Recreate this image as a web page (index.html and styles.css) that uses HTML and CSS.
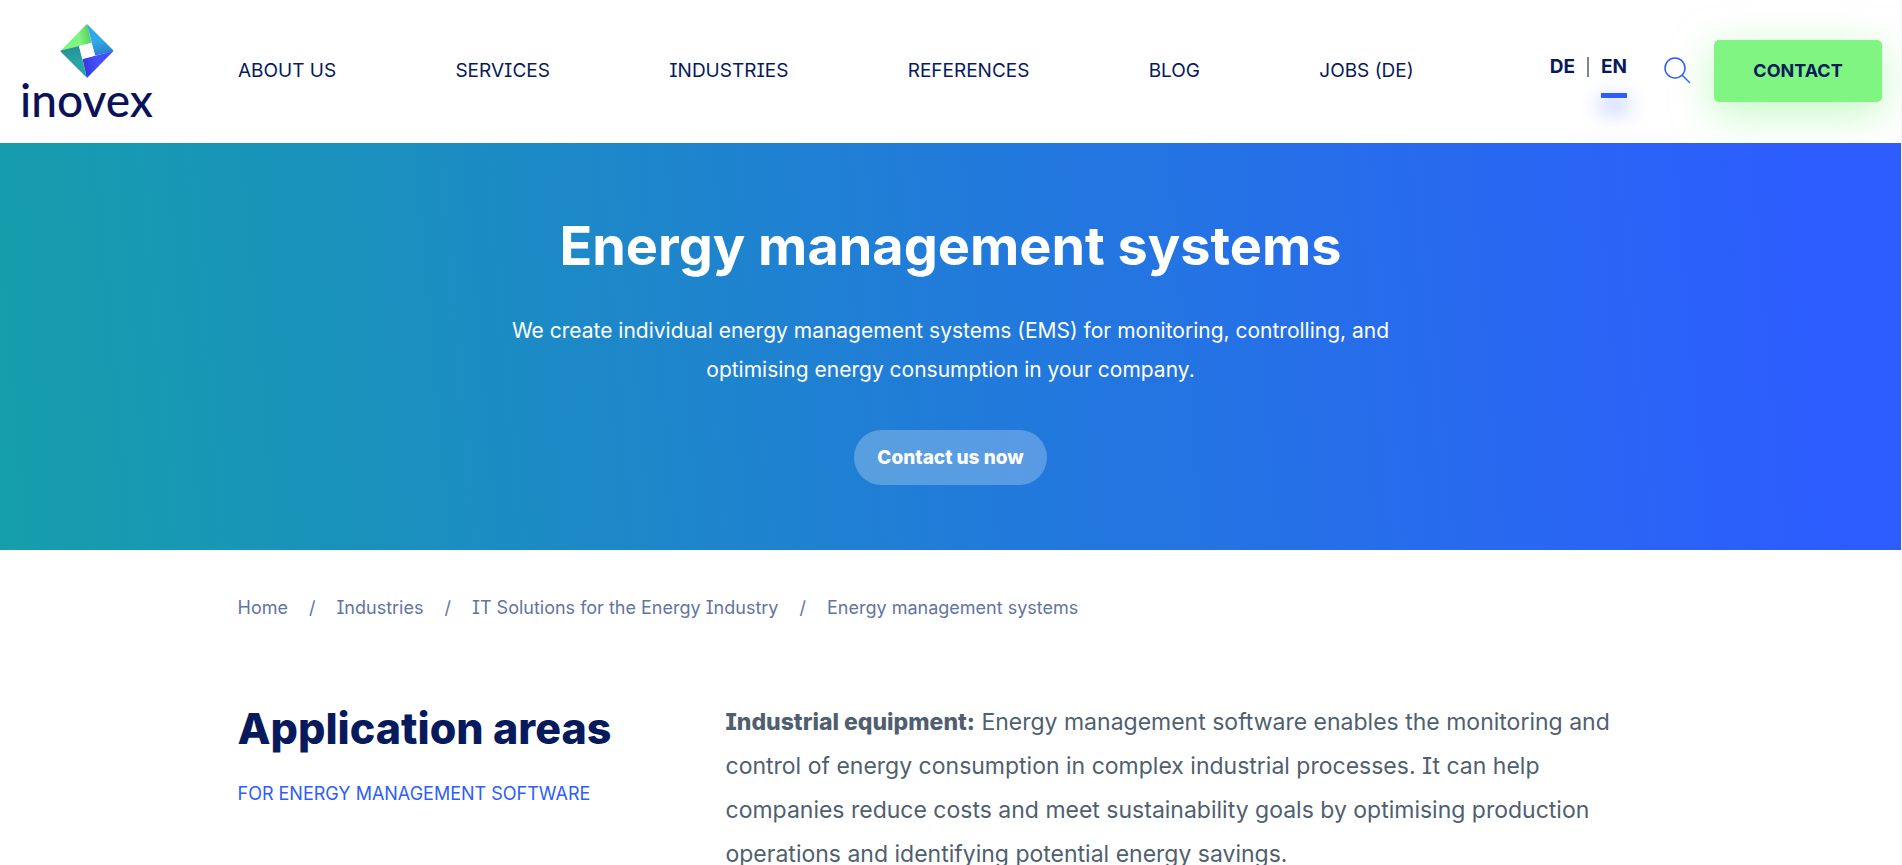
FILE: index.html
```html
<!DOCTYPE html>
<html lang="en">
<head>
    <meta charset="UTF-8">
    <meta name="viewport" content="width=device-width, initial-scale=1.0">
    <title>Energy management systems - inovex</title>
    <link rel="stylesheet" href="styles.css">
</head>
<body>
    <header class="header">
        <a class="logo" href="#" aria-label="inovex">
            <svg class="logo-mark" viewBox="0 0 54 54" aria-hidden="true">
                <defs>
                    <linearGradient id="green" x1="0" y1="0.6" x2="1" y2="0.4">
                        <stop offset="0.6" stop-color="#7ef57e"/>
                        <stop offset="1" stop-color="#57c95f"/>
                    </linearGradient>
                    <linearGradient id="blue" x1="0.3" y1="0" x2="0.5" y2="1">
                        <stop offset="0.55" stop-color="#30a8ea"/>
                        <stop offset="1" stop-color="#2781c4"/>
                    </linearGradient>
                    <linearGradient id="violet" x1="1" y1="0.4" x2="0" y2="0.6">
                        <stop offset="0.5" stop-color="#4450ff"/>
                        <stop offset="1" stop-color="#3436d8"/>
                    </linearGradient>
                    <linearGradient id="teal" x1="0.5" y1="1" x2="0.4" y2="0">
                        <stop offset="0.5" stop-color="#29a5a3"/>
                        <stop offset="1" stop-color="#258e94"/>
                    </linearGradient>
                </defs>
                <path fill="url(#green)" d="M0.500 27 L26 0.800 Q27 0 27.500 1 L31.500 19 L19 22 Z"/>
                <path fill="url(#blue)" d="M27 0 L53 26 Q53.500 27 53 27.500 L35 31.500 Z"/>
                <path fill="url(#violet)" d="M53.500 27 L28 53 Q27 54 26.500 53 L22.500 35 Z"/>
                <path fill="url(#teal)" d="M27 54 L1 28 Q0 27 1 26.500 L19 22 Z"/>
                <path fill="#fff" d="M19 22 L31.500 19 L35 31.500 L22.500 35 Z"/>
            </svg>
            <span class="logo-text">inovex</span>
        </a>
        <nav class="nav">
            <a href="#">ABOUT US</a>
            <a href="#">SERVICES</a>
            <a href="#">INDUSTRIES</a>
            <a href="#">REFERENCES</a>
            <a href="#">BLOG</a>
            <a href="#">JOBS (DE)</a>
        </nav>
        <div class="tools">
            <div class="languages">
                <a href="#">DE</a>
                <span class="divider"></span>
                <a class="active" href="#">EN</a>
            </div>
            <button class="search" type="button" aria-label="Search">
                <svg viewBox="0 0 27 27" aria-hidden="true">
                    <circle cx="11" cy="11" r="10"/>
                    <path d="M18 18 L26 26"/>
                </svg>
            </button>
            <a class="contact" href="#">CONTACT</a>
        </div>
    </header>

    <section class="hero">
        <h1>Energy management systems</h1>
        <p>We create individual energy management systems (EMS) for monitoring, controlling, and optimising energy consumption in your company.</p>
        <a class="hero-button" href="#">Contact us now</a>
    </section>

    <main class="container">
        <nav class="breadcrumb" aria-label="Breadcrumb">
            <a href="#">Home</a>
            <span>/</span>
            <a href="#">Industries</a>
            <span>/</span>
            <a href="#">IT Solutions for the Energy Industry</a>
            <span>/</span>
            <span>Energy management systems</span>
        </nav>
        <section class="areas">
            <div>
                <h2>Application areas</h2>
                <p class="subline">FOR ENERGY MANAGEMENT SOFTWARE</p>
            </div>
            <p class="text"><strong>Industrial equipment:</strong> Energy management software enables the monitoring and control of energy consumption in complex industrial processes. It can help companies reduce costs and meet sustainability goals by optimising production operations and identifying potential energy savings.</p>
        </section>
    </main>
</body>
</html>
```
FILE: styles.css
```css
* {
    box-sizing: border-box;
}
html {
    overflow: hidden;
}
body {
    margin: 0;
    border-right: 1px solid #f6f6f6;
    font-family: Inter, "Noto Sans", sans-serif;
    font-feature-settings: "cv08";
    color: #061a5c;
    background: #fff;
}
a {
    color: inherit;
    text-decoration: none;
}
h1, h2, p {
    margin: 0;
}

/* header */
.header {
    display: flex;
    align-items: center;
    height: 143px;
    padding: 0 19px 2px;
}
.logo {
    display: flex;
    flex-direction: column;
    align-items: center;
    width: 135px;
    padding-top: 4px;
}
.logo-mark {
    width: 54px;
    height: 54px;
}
.logo-text {
    font-family: Lato, sans-serif;
    font-size: 46px;
    font-weight: 500;
    line-height: 44px;
    color: #0c1259;
}
.nav {
    display: flex;
    flex: 1;
    justify-content: space-between;
    margin: 0 136px 0 84px;
    font-size: 19px;
    line-height: 24px;
    white-space: nowrap;
}
.tools {
    display: flex;
    align-items: center;
}
.languages {
    display: flex;
    gap: 12px;
    margin-right: 37px;
    padding-bottom: 8px;
    font-size: 19px;
    font-weight: 700;
    line-height: 24px;
}
.languages a {
    position: relative;
}
.divider {
    width: 2px;
    height: 20px;
    margin-top: 2px;
    background: #7d8694;
}
.active::after {
    content: "";
    position: absolute;
    left: 0;
    right: 0;
    top: 38px;
    height: 5px;
    background: #2d5cff;
    box-shadow: 0 10px 20px rgba(45, 92, 255, 0.9);
}
.search {
    display: flex;
    margin-right: 23px;
    padding: 0;
    border: none;
    background: none;
    cursor: pointer;
}
.search svg {
    width: 27px;
    height: 27px;
    fill: none;
    stroke: #2d5cff;
    stroke-width: 1.5;
}
.contact {
    width: 168px;
    border-radius: 5px;
    background: #80f582;
    box-shadow: 0 10px 40px rgba(128, 245, 130, 0.5);
    font-size: 18px;
    font-weight: 700;
    line-height: 62px;
    text-align: center;
}

/* hero */
.hero {
    position: relative;
    display: flex;
    flex-direction: column;
    align-items: center;
    padding: 70px 20px 65px;
    background: linear-gradient(85deg, #15a0a9 -2%, #217bda 51%, #2d5cff 96%);
    color: #fff;
    text-align: center;
}
.hero h1 {
    font-size: 54px;
    line-height: 66px;
}
.hero p {
    max-width: 900px;
    margin: 32px 0 41px;
    font-size: 21px;
    line-height: 39px;
}
.hero-button {
    width: 193px;
    border-radius: 28px;
    background: rgba(255, 255, 255, 0.25);
    font-size: 19px;
    font-weight: 800;
    line-height: 55px;
}

/* content */
.container {
    max-width: 1426px;
    margin: 0 auto;
}
.breadcrumb {
    display: flex;
    gap: 21px;
    padding-top: 45px;
    font-size: 18px;
    line-height: 26px;
    color: #6274a2;
}
.areas {
    display: grid;
    grid-template-columns: 388px 1fr;
    gap: 100px;
    margin-top: 79px;
}
.areas h2 {
    margin-top: 1px;
    font-size: 43px;
    font-weight: 800;
    line-height: 54px;
    white-space: nowrap;
}
.subline {
    margin-top: 27px;
    font-size: 18px;
    line-height: 24px;
    color: #2d5cff;
}
.text {
    max-width: 910px;
    font-size: 23px;
    line-height: 44px;
    color: #505f70;
}
.text strong {
    font-weight: 800;
}
```
